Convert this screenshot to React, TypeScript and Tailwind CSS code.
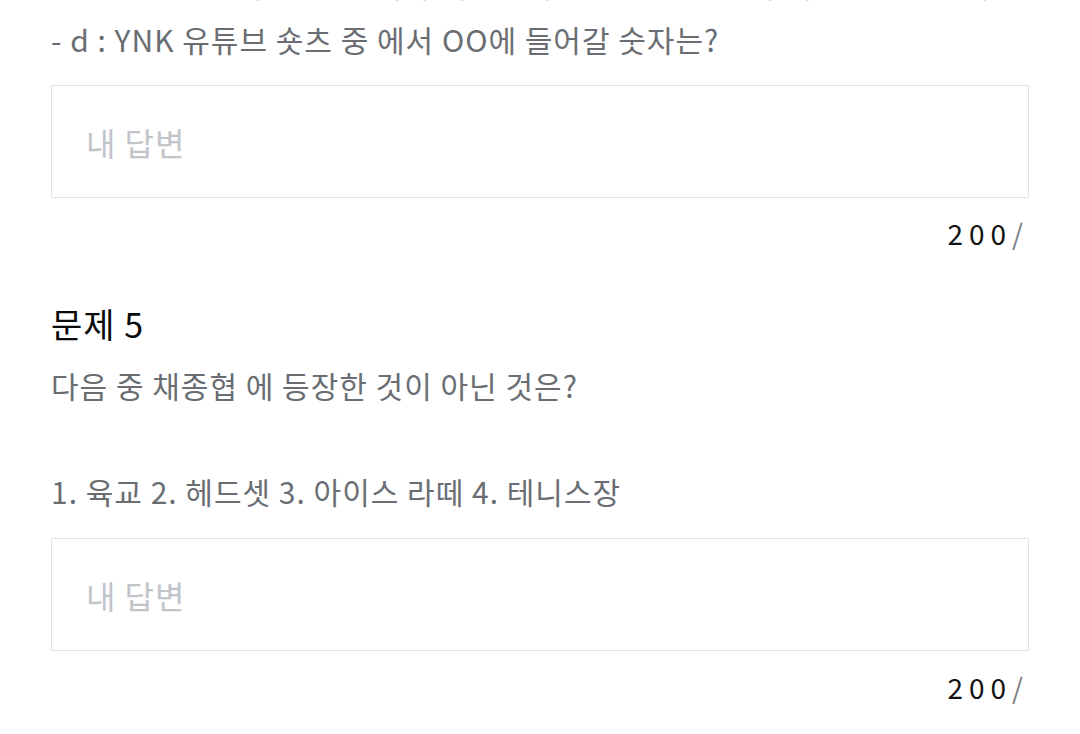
import React from "react";

interface QuestionProps {
  lines: string[];
}

const AnswerBox: React.FC = () => (
  <div className="flex h-[113px] items-center border border-[#e1e1e1] px-[34px]">
    <span className="text-[32px] leading-none tracking-[1px] text-[#c1c4c8]">내 답변</span>
  </div>
);

const Counter: React.FC<{ className?: string }> = ({ className }) => (
  <div className={"flex justify-end text-[28px] leading-[40px] tracking-[6px] " + (className ?? "")}>
    <span className="text-[#111111]">200</span>
    <span className="text-[#7b7e83]">/</span>
  </div>
);

const Question: React.FC<QuestionProps> = ({ lines }) => (
  <p className="text-[30px] leading-[53px] tracking-[1px] text-[#6a6d72]">
    {lines.map((line, idx) => (
      <span key={idx} className="block min-h-[53px]">
        {line}
      </span>
    ))}
  </p>
);

export default function App() {
  return (
    <div className="min-h-screen overflow-hidden bg-white px-[51px] font-['Noto_Sans_CJK_KR','Noto_Sans',sans-serif]">
      {/* previous line, scrolled mostly out of view */}
      <p className="-mt-[42px] text-[30px] leading-[53px] tracking-[1px] text-[#6a6d72]">
        - c : YNK 인스타 릴스 중 에서 채종협이 들고 있던 물건의 색깔은 무엇일까요
      </p>
      <div className="mt-[2px]">
        <Question lines={["- d : YNK 유튜브 숏츠 중 에서 OO에 들어갈 숫자는?"]} />
      </div>
      <div className="mt-[19px]">
        <AnswerBox />
      </div>
      <Counter className="mt-[15px]" />

      <h2 className="mt-[49px] text-[34px] leading-[44px] tracking-[1px] text-[#0a0a0a]">문제 5</h2>
      <div className="mt-[13px]">
        <Question lines={["다음 중 채종협 에 등장한 것이 아닌 것은?", "", "1. 육교 2. 헤드셋 3. 아이스 라떼 4. 테니스장"]} />
      </div>
      <div className="mt-[20px]">
        <AnswerBox />
      </div>
      <Counter className="mt-[16px]" />
    </div>
  );
}
